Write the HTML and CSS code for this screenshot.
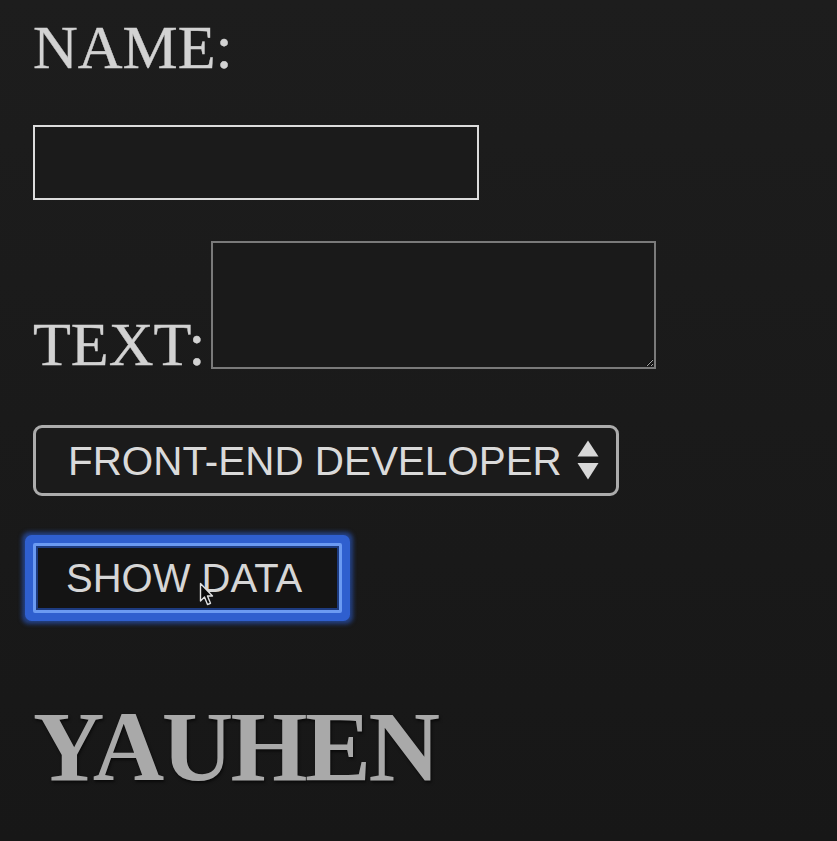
FILE: index.html
```html
<!DOCTYPE html>
<html lang="en">
<head>
<meta charset="utf-8">
<title>Form</title>
<link rel="stylesheet" href="styles.css">
</head>
<body>
<main class="form">
  <label class="label name-label" for="name">NAME:</label>
  <input class="name-input" id="name" type="text">
  <div class="text-row">
    <label class="label text-label" for="text">TEXT:</label>
    <textarea class="text-area" id="text"></textarea>
  </div>
  <div class="select-wrap">
    <select class="role-select">
      <option>FRONT-END DEVELOPER</option>
    </select>
    <svg class="select-arrows" width="22" height="40" viewBox="0 0 22 40" aria-hidden="true">
      <path d="M11 0.5 L21.5 16.5 L0.5 16.5 Z" fill="#d8d8d8"/>
      <path d="M0.5 23 L21.5 23 L11 39.5 Z" fill="#d8d8d8"/>
    </svg>
  </div>
  <div class="button-wrap">
    <button class="show-btn" type="button">SHOW DATA</button>
    <svg class="cursor" width="16" height="26" viewBox="0 0 16 26" aria-hidden="true">
      <path d="M1.5 1.5 L1.5 19 L5.5 15 L8.5 22.5 L11.5 21.3 L8.5 14 L13.5 14 Z" fill="#0a0a0a" stroke="#e0e0e0" stroke-width="1.4" stroke-linejoin="round"/>
    </svg>
  </div>
  <h1 class="result">YAUHEN</h1>
</main>
</body>
</html>
```
FILE: styles.css
```css
html, body {
  margin: 0;
  padding: 0;
}
body {
  background: linear-gradient(#1d1d1d, #171717);
  min-height: 841px;
  font-family: "Liberation Serif", "Times New Roman", serif;
  color: #d0d0d0;
}
.form {
  display: flex;
  flex-direction: column;
  align-items: flex-start;
  padding: 16px 0 0 33px;
}
.label {
  font-family: "Liberation Serif", "Times New Roman", serif;
  font-size: 62px;
  color: #d2d2d2;
  -webkit-text-stroke: 0.4px #d2d2d2;
}
.name-label {
  line-height: 62px;
  display: block;
}
.name-input {
  margin-top: 47px;
  box-sizing: border-box;
  width: 446px;
  height: 75px;
  border: 2px solid #dcdcdc;
  background: #1b1b1b;
  outline: none;
  padding: 0;
}
.text-row {
  margin-top: 41px;
  display: flex;
  align-items: flex-end;
  gap: 5px;
}
.text-label {
  line-height: 50px;
}
.text-area {
  box-sizing: border-box;
  width: 445px;
  height: 128px;
  border: 2px solid #7a7a7a;
  background: #1a1a1a;
  margin: 0;
  resize: both;
  color-scheme: dark;
}
.select-wrap {
  margin-top: 56px;
  position: relative;
}
.role-select {
  appearance: none;
  -webkit-appearance: none;
  box-sizing: border-box;
  width: 586px;
  height: 71px;
  border: 3px solid #acacac;
  border-radius: 9px;
  background: #1b1b1b;
  color: #dadada;
  font-family: "Liberation Sans", Arial, sans-serif;
  font-size: 40.4px;
  padding: 0 0 0 32px;
  outline: none;
}
.select-arrows {
  position: absolute;
  left: 544px;
  top: 15px;
}
.button-wrap {
  margin-top: 47px;
  position: relative;
}
.show-btn {
  box-sizing: border-box;
  width: 309px;
  height: 70px;
  background: #141414;
  color: #d6d6d6;
  font-family: "Liberation Sans", Arial, sans-serif;
  font-size: 40px;
  padding: 0 0 0 30px;
  text-align: left;
  border: 3px solid #6b9af2;
  border-radius: 2px;
  box-shadow:
    inset 0 0 0 2px #1d3b80,
    0 0 0 8px #2f5fcf,
    0 0 4px 11px rgba(44, 92, 205, 0.6);
}
.cursor {
  position: absolute;
  left: 166px;
  top: 39px;
}
.result {
  margin: 84px 0 0 0;
  font-family: "Liberation Serif", "Times New Roman", serif;
  font-weight: bold;
  font-size: 99px;
  line-height: 100px;
  letter-spacing: -2.6px;
  color: #a9a9a9;
  text-shadow: 1px 2px 3px rgba(0, 0, 0, 0.6);
}
```
